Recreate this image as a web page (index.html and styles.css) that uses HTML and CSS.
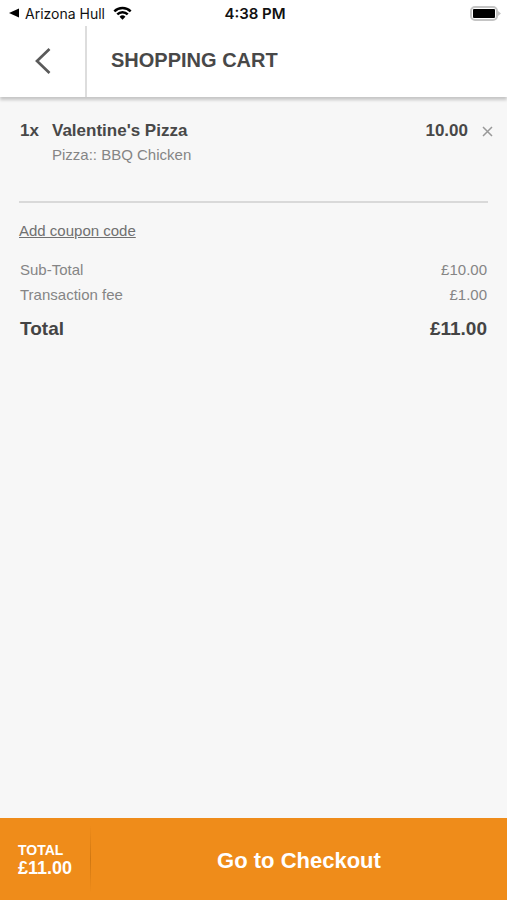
FILE: index.html
```html
<!DOCTYPE html>
<html lang="en">
<head>
<meta charset="utf-8">
<meta name="viewport" content="width=device-width, initial-scale=1">
<title>Shopping cart</title>
<link rel="stylesheet" href="styles.css">
</head>
<body>
<div class="status">
  <div class="status-left">
    <svg width="11" height="10" viewBox="0 0 11 10" aria-hidden="true"><path d="M0 5 10 .5v9z"/></svg>
    <span>Arizona Hull</span>
    <svg class="wifi" width="19" height="14" viewBox="0 0 20 14" aria-hidden="true"><g fill="none" stroke="#000" stroke-width="2.6"><path d="M1.4 5.2a12.4 12.4 0 0 1 17.2 0"/><path d="M4.5 8.5a7.8 7.8 0 0 1 11 0"/></g><path d="M6.9 10.9a4.5 4.5 0 0 1 6.2 0L10 14z"/></svg>
  </div>
  <span class="clock">4:38 PM</span>
  <svg class="battery" width="31" height="15" viewBox="0 0 31 15" aria-hidden="true"><rect x="1" y="1" width="26" height="13" rx="4" fill="#fff" stroke="#c4c4c4" stroke-width="2"/><rect x="3" y="3" width="22" height="9" rx="1"/><path d="M28 5v5l3-2.500z" fill="#c4c4c4"/></svg>
</div>
<header class="header">
  <button class="back" type="button" aria-label="Back">
    <svg width="16" height="26" viewBox="0 0 16 26" aria-hidden="true"><path d="M14.500 1 2 13l12.500 12" fill="none" stroke="#5a5a5a" stroke-width="2.700"/></svg>
  </button>
  <h1>SHOPPING CART</h1>
</header>
<main class="cart">
  <section class="item">
    <span class="strong">1x</span>
    <div>
      <h2 class="strong">Valentine's Pizza</h2>
      <p class="option">Pizza:: BBQ Chicken</p>
    </div>
    <span class="strong">10.00</span>
    <button class="remove" type="button" aria-label="Remove Valentine's Pizza">
      <svg width="11" height="11" viewBox="0 0 11 11" aria-hidden="true"><path d="m1 1 9 9m0-9-9 9" stroke="#999" stroke-width="1.500"/></svg>
    </button>
  </section>
  <a class="coupon" href="#coupon">Add coupon code</a>
  <dl class="sums">
    <div><dt>Sub-Total</dt><dd>£10.00</dd></div>
    <div><dt>Transaction fee</dt><dd>£1.00</dd></div>
    <div class="total"><dt>Total</dt><dd>£11.00</dd></div>
  </dl>
</main>
<footer class="bar">
  <div class="bar-total"><span class="bar-label">TOTAL</span><span>£11.00</span></div>
  <button class="checkout" type="button">Go to Checkout</button>
</footer>
</body>
</html>
```
FILE: styles.css
```css
* {
  box-sizing: border-box;
  margin: 0;
  padding: 0;
}

body {
  display: flex;
  flex-direction: column;
  min-height: 100vh;
  background: #f7f7f7;
  color: #484848;
  font-family: "Liberation Sans", Arial, sans-serif;
  font-size: 15px;
}

button {
  border: 0;
  background: none;
  font: inherit;
  color: inherit;
  cursor: pointer;
}

svg {
  display: block;
}

.status {
  display: grid;
  grid-template-columns: 1fr auto 1fr;
  align-items: center;
  height: 26px;
  padding: 0 6px 0 9px;
  background: #fff;
  color: #111;
  font-family: Inter, sans-serif;
  font-size: 14px;
}

.status-left {
  display: flex;
  align-items: center;
  gap: 5px;
}

.wifi {
  margin-left: 3px;
}

.clock {
  font-size: 15px;
  font-weight: 600;
}

.battery {
  justify-self: end;
}

.header {
  display: flex;
  height: 71px;
  background: #fff;
  box-shadow: 0 3px 3px rgba(0, 0, 0, 0.2);
}

.back {
  display: grid;
  place-items: center;
  width: 87px;
  padding-bottom: 2px;
  border-right: 2px solid #ddd;
}

h1 {
  align-self: center;
  padding: 0 0 3px 24px;
  font-size: 20px;
  line-height: 24px;
}

.cart {
  flex: 1;
  padding: 0 19px;
}

.item {
  display: grid;
  grid-template-columns: 32px 1fr auto auto;
  align-items: start;
  height: 106px;
  padding: 24px 0 0 1px;
  border-bottom: 2px solid #d9d9d9;
}

.strong {
  font-size: 17px;
  font-weight: bold;
  line-height: 20px;
}

.option {
  padding-top: 4px;
  color: #858585;
  line-height: 20px;
}

.remove {
  display: grid;
  place-items: center;
  width: 25px;
  height: 20px;
  margin: 0 -5px 0 0;
  padding-left: 13px;
}

.coupon {
  display: inline-block;
  margin-top: 18px;
  color: #707070;
  line-height: 20px;
}

.sums {
  padding: 16px 1px 0;
  color: #858585;
  line-height: 25px;
}

.sums div {
  display: flex;
  justify-content: space-between;
}

.sums .total {
  padding-top: 9px;
  color: #444;
  font-size: 19px;
  font-weight: bold;
}

.bar {
  display: flex;
  align-items: center;
  height: 82px;
  background: #ef8c1a;
  color: #fff;
  font-weight: bold;
}

.bar-total {
  display: flex;
  flex-direction: column;
  width: 91px;
  padding: 16px 0 14px 18px;
  border-right: 1px solid;
  border-image: linear-gradient(transparent, #cf7712, transparent) 1;
  font-size: 18px;
  line-height: 20px;
}

.bar-label {
  font-size: 14px;
  line-height: 16px;
}

.checkout {
  flex: 1;
  align-self: stretch;
  padding-top: 3px;
  font-size: 22px;
  font-weight: bold;
}
```
